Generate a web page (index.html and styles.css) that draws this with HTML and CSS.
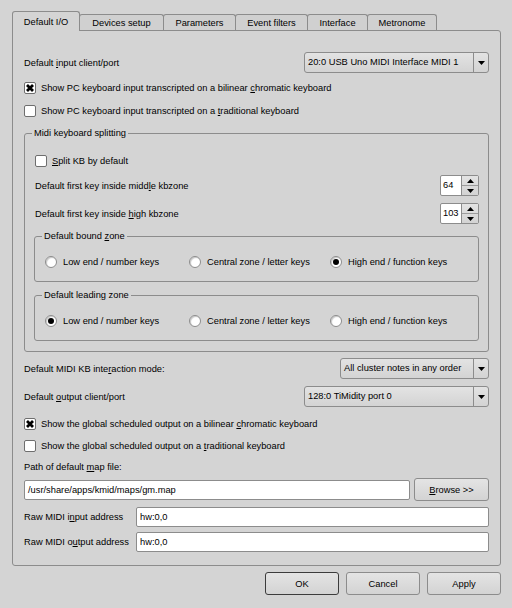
FILE: index.html
```html
<!DOCTYPE html>
<html>
<head>
<meta charset="utf-8">
<link rel="stylesheet" href="styles.css">
</head>
<body>
<div class="dialog">
  <div class="tabbar">
    <div class="tab active">Default I/O</div>
    <div class="tab w-dev">Devices setup</div>
    <div class="tab w-par">Parameters</div>
    <div class="tab w-evt">Event filters</div>
    <div class="tab w-int">Interface</div>
    <div class="tab w-met">Metronome</div>
  </div>
  <div class="panel">
    <div class="row h21">
      <span class="lbl">Default <u>i</u>nput client/port</span>
      <div class="combo w185"><span class="combo-text">20:0 USB Uno MIDI Interface MIDI 1</span><span class="combo-arrow"><svg width="7" height="4" viewBox="0 0 7 4"><path d="M0 0H7L3.5 4Z"/></svg></span></div>
    </div>
    <div class="check mt9"><span class="box"><svg width="10" height="10" viewBox="0 0 10 10"><path d="M2 2L8 8M8 2L2 8" stroke="#000" stroke-width="2.8"/></svg></span><span class="lbl">Show PC keyboard input transcripted on a bilinear <u>c</u>hromatic keyboard</span></div>
    <div class="check mt11"><span class="box"></span><span class="lbl">Show PC keyboard input transcripted on a <u>t</u>raditional keyboard</span></div>

    <div class="group g-main">
      <div class="gtitle">Midi keyboard splitting</div>
      <div class="check mt16"><span class="box"></span><span class="lbl"><u>S</u>plit KB by default</span></div>
      <div class="row h21 mt8">
        <span class="lbl">Default first key inside midd<u>l</u>e kbzone</span>
        <div class="spin"><span class="spin-val">64</span><span class="spin-btns"><span class="spin-up"><svg width="7" height="4" viewBox="0 0 7 4"><path d="M0 4H7L3.5 0Z"/></svg></span><span class="spin-dn"><svg width="7" height="4" viewBox="0 0 7 4"><path d="M0 0H7L3.5 4Z"/></svg></span></span></div>
      </div>
      <div class="row h21 mt7">
        <span class="lbl">Default first key inside <u>h</u>igh kbzone</span>
        <div class="spin"><span class="spin-val">103</span><span class="spin-btns"><span class="spin-up"><svg width="7" height="4" viewBox="0 0 7 4"><path d="M0 4H7L3.5 0Z"/></svg></span><span class="spin-dn"><svg width="7" height="4" viewBox="0 0 7 4"><path d="M0 0H7L3.5 4Z"/></svg></span></span></div>
      </div>
      <div class="group g-sub mt12">
        <div class="gtitle">Default bound <u>z</u>one</div>
        <div class="radios">
          <div class="ritem"><span class="radio"></span><span class="lbl">Low end / number keys</span></div>
          <div class="ritem"><span class="radio"></span><span class="lbl">Central zone / letter keys</span></div>
          <div class="ritem"><span class="radio on"></span><span class="lbl">High end / function keys</span></div>
        </div>
      </div>
      <div class="group g-sub mt13">
        <div class="gtitle">Default leadin<u>g</u> zone</div>
        <div class="radios">
          <div class="ritem"><span class="radio on"></span><span class="lbl">Low end / number keys</span></div>
          <div class="ritem"><span class="radio"></span><span class="lbl">Central zone / letter keys</span></div>
          <div class="ritem"><span class="radio"></span><span class="lbl">High end / function keys</span></div>
        </div>
      </div>
    </div>

    <div class="row h21 mt6">
      <span class="lbl">Default MIDI KB inte<u>r</u>action mode:</span>
      <div class="combo w149"><span class="combo-text">All cluster notes in any order</span><span class="combo-arrow"><svg width="7" height="4" viewBox="0 0 7 4"><path d="M0 0H7L3.5 4Z"/></svg></span></div>
    </div>
    <div class="row h21 mt7">
      <span class="lbl">Default <u>o</u>utput client/port</span>
      <div class="combo w185"><span class="combo-text">128:0 TiMidity port 0</span><span class="combo-arrow"><svg width="7" height="4" viewBox="0 0 7 4"><path d="M0 0H7L3.5 4Z"/></svg></span></div>
    </div>
    <div class="check mt11"><span class="box"><svg width="10" height="10" viewBox="0 0 10 10"><path d="M2 2L8 8M8 2L2 8" stroke="#000" stroke-width="2.8"/></svg></span><span class="lbl">Show the global scheduled output on a bilinear <u>c</u>hromatic keyboard</span></div>
    <div class="check mt10"><span class="box"></span><span class="lbl">Show the global scheduled output on a <u>t</u>raditional keyboard</span></div>
    <div class="lbl plain mt9">Path of default <u>m</u>ap file:</div>
    <div class="row h23 mt5">
      <div class="edit w386">/usr/share/apps/kmid/maps/gm.map</div>
      <div class="btn w75"><span><u>B</u>rowse &gt;&gt;</span></div>
    </div>
    <div class="row h20 mt6">
      <span class="lbl">Raw MIDI i<u>n</u>put address</span>
      <div class="edit w353">hw:0,0</div>
    </div>
    <div class="row h20 mt5">
      <span class="lbl">Raw MIDI o<u>u</u>tput address</span>
      <div class="edit w353">hw:0,0</div>
    </div>
  </div>
  <div class="buttons">
    <div class="btn default">OK</div>
    <div class="btn">Cancel</div>
    <div class="btn">Apply</div>
  </div>
</div>
</body>
</html>
```
FILE: styles.css
```css
* { box-sizing: border-box; }
html, body { margin: 0; padding: 0; }
body {
  width: 512px;
  height: 608px;
  overflow: hidden;
  background: #d4d4d4;
  color: #000;
  font-family: "Liberation Sans", Arial, sans-serif;
  font-size: 9.3px;
  line-height: 12px;
}
u { text-decoration: underline; text-underline-offset: 1px; }

.dialog { padding: 11px 11px 0 12px; }

/* tabs */
.tabbar { display: flex; align-items: flex-end; height: 20px; }
.tab {
  height: 16px;
  margin-bottom: 1px;
  margin-left: -1px;
  border: 1px solid #8c8c8c;
  border-bottom: none;
  border-radius: 3px 3px 0 0;
  background: #d0d0d0;
  display: flex;
  align-items: center;
  justify-content: center;
  white-space: nowrap;
}
.tab.active {
  width: 68px;
  height: 20px;
  margin: 0;
  position: relative;
  z-index: 1;
  background: #d4d4d4;
  align-items: flex-start;
  padding-top: 4px;
}
.w-dev { width: 85px; }
.w-par { width: 73px; }
.w-evt { width: 73px; }
.w-int { width: 61px; }
.w-met { width: 70px; }

.panel {
  margin-top: -1px;
  border: 1px solid #8c8c8c;
  border-radius: 0 3px 3px 3px;
  padding: 21px 11px 13px 11px;
}

/* generic rows */
.row { display: flex; align-items: center; justify-content: space-between; }
.h20 { height: 20px; }
.h21 { height: 21px; }
.h23 { height: 23px; }
.mt5 { margin-top: 5px; }
.mt6 { margin-top: 6px; }
.mt7 { margin-top: 7px; }
.mt8 { margin-top: 8px; }
.mt9 { margin-top: 9px; }
.mt10 { margin-top: 10px; }
.mt11 { margin-top: 11px; }
.mt12 { margin-top: 12px; }
.mt13 { margin-top: 13px; }
.mt16 { margin-top: 16px; }

.lbl { white-space: nowrap; line-height: 12px; }
.plain { display: block; }

/* checkbox */
.check { display: flex; align-items: center; height: 12px; }
.box {
  width: 12px;
  height: 12px;
  flex: none;
  margin-right: 5px;
  border: 1px solid #6e6e6e;
  border-radius: 2px;
  background: #fff;
  display: flex;
  align-items: center;
  justify-content: center;
}

/* combobox */
.combo {
  height: 21px;
  display: flex;
  border: 1px solid #8c8c8c;
  border-radius: 3px;
  background: linear-gradient(#e3e3e3, #d3d3d3);
}
.w185 { width: 185px; }
.w149 { width: 149px; }
.combo-text { flex: 1; padding-left: 3px; line-height: 19px; white-space: nowrap; overflow: hidden; }
.combo-arrow {
  width: 15px;
  border-left: 1px solid #8c8c8c;
  display: flex;
  align-items: center;
  justify-content: center;
}

/* group boxes */
.group {
  border: 1px solid #8c8c8c;
  border-radius: 3px;
}
.g-main { margin-top: 16px; padding: 0 9px 10px 10px; }
.g-sub { margin-left: -1px; padding: 0 0 13px 10px; }
.gtitle {
  width: fit-content;
  margin: -7px 0 0 -3px;
  padding: 0 2px;
  background: #d4d4d4;
  line-height: 12px;
  white-space: nowrap;
}

/* spin box */
.spin {
  width: 39px;
  height: 21px;
  display: flex;
  border: 1px solid #8c8c8c;
  border-radius: 2px;
  background: #fff;
}
.spin-val { flex: 1; padding-left: 2px; line-height: 19px; }
.spin-btns {
  width: 17px;
  border-left: 1px solid #8c8c8c;
  background: linear-gradient(#e3e3e3, #d3d3d3);
  display: flex;
  flex-direction: column;
}
.spin-up, .spin-dn { flex: 1; display: flex; align-items: center; justify-content: center; }
.spin-up { border-bottom: 1px solid #9c9c9c; }

/* radios */
.radios {
  display: grid;
  grid-template-columns: 144px 141px auto;
  margin-top: 14px;
  height: 12px;
}
.ritem { display: flex; align-items: center; }
.radio {
  width: 12px;
  height: 12px;
  flex: none;
  margin-right: 6px;
  border-radius: 50%;
  border: 1px solid #8c8c8c;
  background: #fff;
  box-shadow: inset 1px 1px 1px #c8c8c8;
  display: flex;
  align-items: center;
  justify-content: center;
}
.radio.on::after {
  content: "";
  width: 6px;
  height: 6px;
  border-radius: 50%;
  background: #000;
}

/* line edits */
.edit {
  height: 20px;
  border: 1px solid #8c8c8c;
  border-radius: 2px;
  background: #fff;
  padding-left: 3px;
  line-height: 18px;
  white-space: nowrap;
}
.w386 { width: 386px; }
.w353 { width: 353px; }

/* buttons */
.btn {
  width: 74px;
  height: 23px;
  border: 1px solid #8c8c8c;
  border-radius: 3px;
  background: linear-gradient(#e4e4e4, #d3d3d3);
  display: flex;
  align-items: center;
  justify-content: center;
  white-space: nowrap;
}
.btn.w75 { width: 75px; }
.btn.default { border-color: #3c3c3c; }
.buttons {
  display: flex;
  justify-content: flex-end;
  gap: 7px;
  margin-top: 6px;
}
```
